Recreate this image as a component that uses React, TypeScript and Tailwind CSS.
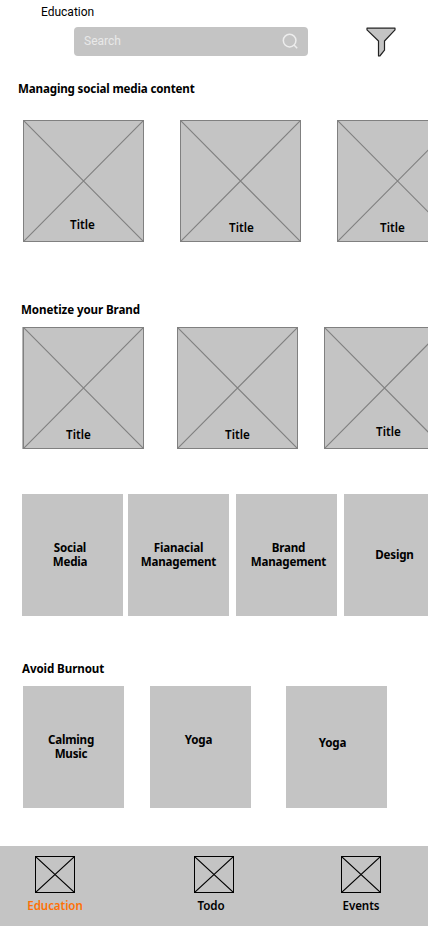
import type { ReactNode } from 'react';

const CrossLines = ({ className }: { className: string }) => (
  <svg className={className} viewBox="0 0 100 100" preserveAspectRatio="none" fill="none" aria-hidden="true">
    <path d="M0 0L100 100M100 0L0 100" stroke="currentColor" strokeWidth="1.15" vectorEffect="non-scaling-stroke" />
  </svg>
);

const ImageCard = ({ className }: { className: string }) => (
  <article className={`relative h-[122px] w-[121px] shrink-0 border border-[#808080] bg-[#c4c4c4] text-[#808080] ${className}`}>
    <CrossLines className="absolute inset-0 h-full w-full" />
    <h3 className="relative text-[11.7px] leading-[14px] font-semibold text-black">Title</h3>
  </article>
);

const Tile = ({ className, children }: { className: string; children: ReactNode }) => (
  <article className={`h-[122px] w-[101px] shrink-0 bg-[#c4c4c4] text-center whitespace-nowrap text-[11.6px] leading-[14px] font-bold tracking-[-0.2px] ${className}`}>
    {children}
  </article>
);

const Heading = ({ className, children }: { className: string; children: ReactNode }) => (
  <h2 className={`h-[14px] whitespace-nowrap text-[11.6px] leading-[14px] font-bold ${className}`}>{children}</h2>
);

const NavItem = ({ label, className, labelClass = '' }: { label: string; className: string; labelClass?: string }) => (
  <a className={`flex flex-col items-center ${className}`}>
    <span className="block h-[37px] w-10 border border-black">
      <CrossLines className="h-full w-full" />
    </span>
    <span className={`mt-[6px] whitespace-nowrap text-[11.6px] leading-[14px] font-semibold tracking-[-0.1px] ${labelClass}`}>{label}</span>
  </a>
);

export default function App() {
  return (
    <div className="flex h-[926px] w-[428px] flex-col overflow-hidden bg-white font-['Noto_Sans',sans-serif] text-black">
      <header className="h-[82px] shrink-0 font-[Roboto,sans-serif] text-xs leading-[14px]">
        <h1 className="pt-[5px] pl-[41px]">Education</h1>
        <div className="mt-2 flex items-start pl-[74px]">
          <div className="flex h-[29px] w-[234px] items-center justify-between rounded bg-[#c4c4c4] pr-[9px] pl-[10px] text-[#e9e9e9]">
            <span className="pb-px">Search</span>
            <svg width="17" height="17" viewBox="0 0 17 17" fill="none" stroke="#ededed" strokeWidth="1.5" aria-hidden="true">
              <circle cx="7.6" cy="7.6" r="6.3" />
              <path d="M12 12l3.2 3.2" />
            </svg>
          </div>
          <svg className="ml-[58px]" width="31" height="31" viewBox="0 0 31 31" aria-hidden="true">
            <path d="M1 1.2H29V2.9L18.5 14V23.2L13.8 29H12.5V14L1 2.9Z" fill="#c4c4c4" stroke="#222" strokeWidth="1.2" strokeLinejoin="round" />
          </svg>
        </div>
      </header>

      <section className="h-[221px] shrink-0">
        <Heading className="pl-[18px] tracking-[-0.16px]">Managing social media content</Heading>
        <div className="mt-6 flex gap-9 pl-[23px]">
          <ImageCard className="pt-[96px] pl-[46px]" />
          <ImageCard className="pt-[99px] pl-[48px]" />
          <ImageCard className="pt-[99px] pl-[42px]" />
        </div>
      </section>

      <section className="h-[191px] shrink-0">
        <Heading className="pl-[21px] tracking-[-0.1px]">Monetize your Brand</Heading>
        <div className="mt-[10px] flex pl-[23px]">
          <ImageCard className="pt-[99px] pl-[42px] shadow-[-1px_0_0_#b5b5b5]" />
          <ImageCard className="ml-[33px] pt-[99px] pl-[47px]" />
          <ImageCard className="ml-[26px] pt-[96px] pl-[51px]" />
        </div>
      </section>

      <section className="flex h-[168px] shrink-0 pl-[22px]">
        <Tile className="pt-[47px] pr-[5px]">Social<br />Media</Tile>
        <Tile className="ml-[5px] pt-[47px]">Fianacial<br />Management</Tile>
        <Tile className="ml-[7px] pt-[47px] pl-1">Brand<br />Management</Tile>
        <Tile className="ml-[7px] pt-[54px]">Design</Tile>
      </section>

      <section className="h-[184px] shrink-0">
        <Heading className="pl-[22px] tracking-[-0.1px]">Avoid Burnout</Heading>
        <div className="mt-[10px] flex pl-[23px]">
          <Tile className="pt-[47px] pr-[5px]">Calming<br />Music</Tile>
          <Tile className="ml-[26px] pt-[47px] pr-[4px]">Yoga</Tile>
          <Tile className="ml-[35px] pt-[50px] pr-[8px]">Yoga</Tile>
        </div>
      </section>

      <nav className="flex h-20 shrink-0 items-start bg-[#c4c4c4] pt-[10px] pl-[25px]">
        <NavItem label="Education" className="w-[60px]" labelClass="text-[#ff7006]" />
        <NavItem label="Todo" className="ml-[99px] w-[60px]" labelClass="pr-[6px]" />
        <NavItem label="Events" className="ml-[87px] w-[60px]" />
      </nav>
    </div>
  );
}
